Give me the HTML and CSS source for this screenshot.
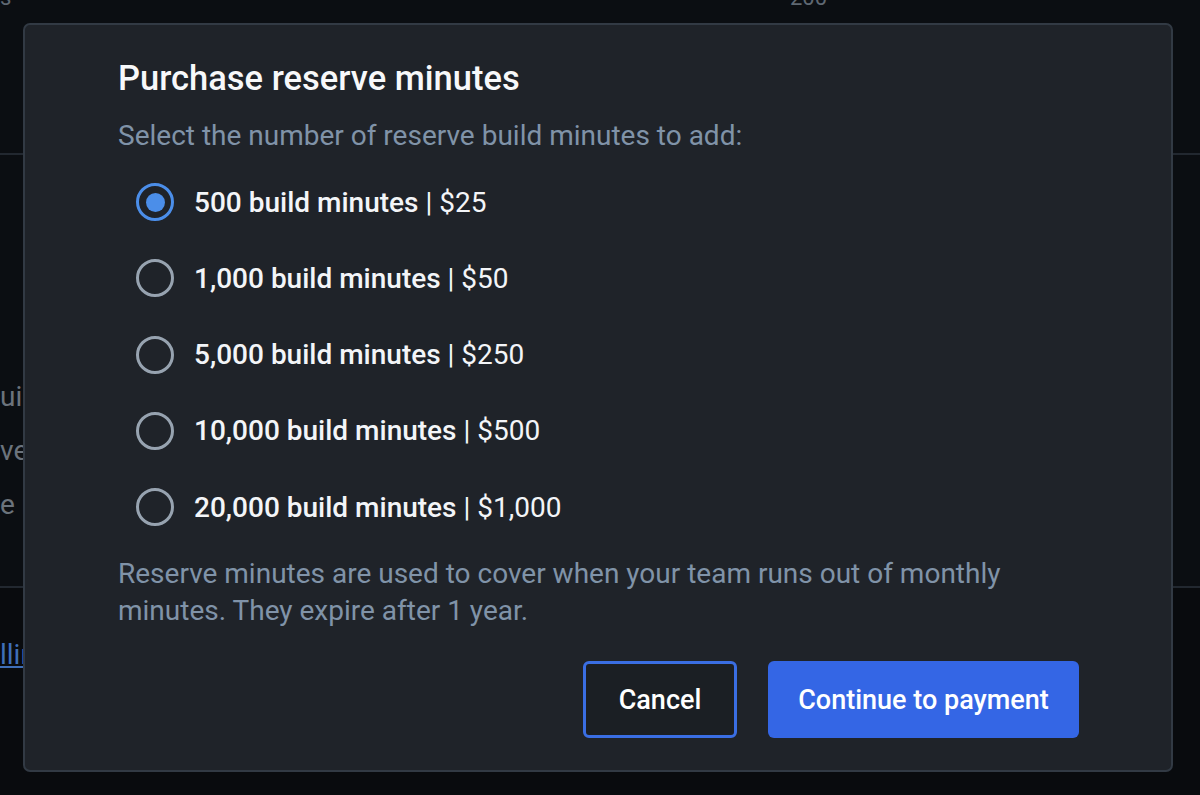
FILE: index.html
```html
<!DOCTYPE html>
<html lang="en">
<head>
<meta charset="utf-8">
<title>Purchase reserve minutes</title>
<link rel="stylesheet" href="styles.css">
</head>
<body>
<div class="page">
  <div class="page-top">
    <span class="axis-s">s</span>
    <span class="axis-200">200</span>
  </div>
  <div class="page-mid">
    <p class="frag">uild minutes</p>
    <p class="frag">ve minutes</p>
    <p class="frag">e minutes</p>
  </div>
  <div class="page-bottom">
    <a class="frag-link" href="#">lling</a>
  </div>
</div>

<div class="dialog" role="dialog" aria-labelledby="dlg-title">
  <h2 id="dlg-title" class="title">Purchase reserve minutes</h2>
  <p class="subtitle">Select the number of reserve build minutes to add:</p>
  <div class="options">
    <label class="option">
      <span class="radio checked"></span>
      <span class="label"><b>500 build minutes</b> | $25</span>
    </label>
    <label class="option">
      <span class="radio"></span>
      <span class="label"><b>1,000 build minutes</b> | $50</span>
    </label>
    <label class="option">
      <span class="radio"></span>
      <span class="label"><b>5,000 build minutes</b> | $250</span>
    </label>
    <label class="option">
      <span class="radio"></span>
      <span class="label"><b>10,000 build minutes</b> | $500</span>
    </label>
    <label class="option">
      <span class="radio"></span>
      <span class="label"><b>20,000 build minutes</b> | $1,000</span>
    </label>
  </div>
  <p class="note">Reserve minutes are used to cover when your team runs out of monthly minutes. They expire after 1 year.</p>
  <div class="actions">
    <button class="btn btn-cancel">Cancel</button>
    <button class="btn btn-primary">Continue to payment</button>
  </div>
</div>
</body>
</html>
```

FILE: styles.css
```css
* { box-sizing: border-box; }

html, body {
  margin: 0;
  padding: 0;
  width: 1200px;
  height: 795px;
  overflow: hidden;
  background: #0b0e12;
  font-family: Roboto, "Liberation Sans", sans-serif;
}

.page {
  width: 1200px;
  height: 795px;
  display: flex;
  flex-direction: column;
  color: #5f6872;
}

.page-top {
  height: 155px;
  border-bottom: 2px solid #222830;
  display: flex;
  align-items: flex-start;
  font-size: 22px;
  line-height: 22px;
}

.axis-s {
  margin-top: -13px;
  width: 790px;
}

.axis-200 {
  margin-top: -13px;
}

.page-mid {
  height: 433px;
  border-bottom: 2px solid #222830;
  padding-top: 226px;
  display: flex;
  flex-direction: column;
  gap: 22px;
}

.frag {
  margin: 0;
  font-size: 28px;
  line-height: 32px;
  color: #6b737c;
  white-space: nowrap;
}

.page-bottom {
  flex: 1;
  background: #090b0e;
  padding-top: 50px;
}

.frag-link {
  font-size: 28px;
  color: #3f6fb8;
  text-decoration: underline;
}

.dialog {
  position: fixed;
  left: 23px;
  top: 23px;
  width: 1150px;
  height: 749px;
  background: #1f2329;
  border: 2px solid #323a44;
  border-radius: 7px;
  padding: 33px 92px 32px 93px;
  display: flex;
  flex-direction: column;
  color: #f3f5f8;
}

.title {
  margin: 0;
  font-size: 34.5px;
  font-weight: 500;
  line-height: 40px;
  color: #f7f8fa;
}

.subtitle {
  margin: 21px 0 0 0;
  font-size: 28px;
  line-height: 33px;
  color: #8093a8;
}

.options {
  margin-top: 31px;
  display: flex;
  flex-direction: column;
  gap: 38.3px;
}

.option {
  display: flex;
  align-items: center;
  gap: 20px;
  height: 38px;
  padding-left: 18px;
}

.radio {
  width: 38px;
  height: 38px;
  border-radius: 50%;
  border: 3px solid #97a3b0;
  flex: none;
  display: flex;
  align-items: center;
  justify-content: center;
}

.radio.checked {
  border-color: #4b8ee9;
}

.radio.checked::after {
  content: "";
  width: 19px;
  height: 19px;
  border-radius: 50%;
  background: #4b8ee9;
}

.label {
  font-size: 28px;
  font-weight: 400;
  line-height: 33px;
  color: #f3f5f8;
  white-space: nowrap;
}

.label b {
  font-weight: 500;
}

.note {
  margin: 29px 0 0 0;
  font-size: 28px;
  line-height: 37px;
  color: #8093a8;
}

.actions {
  margin-top: auto;
  display: flex;
  justify-content: flex-end;
  gap: 31px;
}

.btn {
  height: 77px;
  border-radius: 6px;
  font-family: Roboto, "Liberation Sans", sans-serif;
  font-size: 27px;
  font-weight: 500;
  color: #ffffff;
  cursor: pointer;
}

.btn-cancel {
  width: 154px;
  background: #1b1f24;
  border: 3px solid #3a6ee3;
}

.btn-primary {
  width: 311px;
  background: #3466e5;
  border: none;
}
```
